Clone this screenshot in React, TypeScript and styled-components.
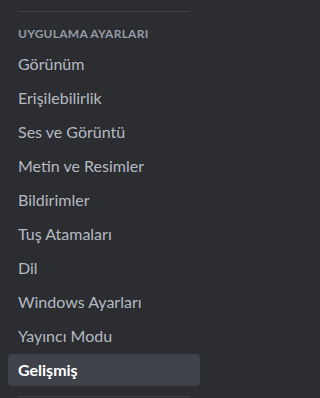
import React from "react";
import styled, { createGlobalStyle } from "styled-components";

const GlobalStyle = createGlobalStyle`
  html, body {
    margin: 0;
    padding: 0;
    background: #2b2d31;
  }
  body {
    font-family: Lato, "Noto Sans", sans-serif;
  }
`;

const items = [
  "Görünüm",
  "Erişilebilirlik",
  "Ses ve Görüntü",
  "Metin ve Resimler",
  "Bildirimler",
  "Tuş Atamaları",
  "Dil",
  "Windows Ayarları",
  "Yayıncı Modu",
  "Gelişmiş",
];

const App = () => {
  return (
    <>
      <GlobalStyle />
      <Sidebar>
        <Separator />
        <Header>Uygulama Ayarları</Header>
        {items.map((label) => (
          <Item key={label} $active={label === "Gelişmiş"}>
            {label}
          </Item>
        ))}
        <Separator />
      </Sidebar>
    </>
  );
};

const Sidebar = styled.nav`
  width: 192px;
  height: 398px;
  padding: 3px 0 0 8px;
  box-sizing: content-box;
  background: #2b2d31;
  display: flex;
  flex-direction: column;
  overflow: hidden;
`;

const Separator = styled.div`
  height: 1px;
  margin: 8px 10px;
  background: #3f4147;
  flex-shrink: 0;
`;

const Header = styled.div`
  padding: 6px 10px;
  font-size: 12px;
  line-height: 16px;
  font-weight: 700;
  letter-spacing: 0.02em;
  text-transform: uppercase;
  color: #949ba4;
`;

const Item = styled.div<{ $active?: boolean }>`
  padding: 6px 10px;
  margin-bottom: 2px;
  border-radius: 4px;
  font-size: 16px;
  line-height: 20px;
  font-weight: ${(p) => (p.$active ? 700 : 400)};
  color: ${(p) => (p.$active ? "#ffffff" : "#b5bac1")};
  background: ${(p) => (p.$active ? "#404249" : "transparent")};
  white-space: nowrap;
  flex-shrink: 0;
`;

export default App;
